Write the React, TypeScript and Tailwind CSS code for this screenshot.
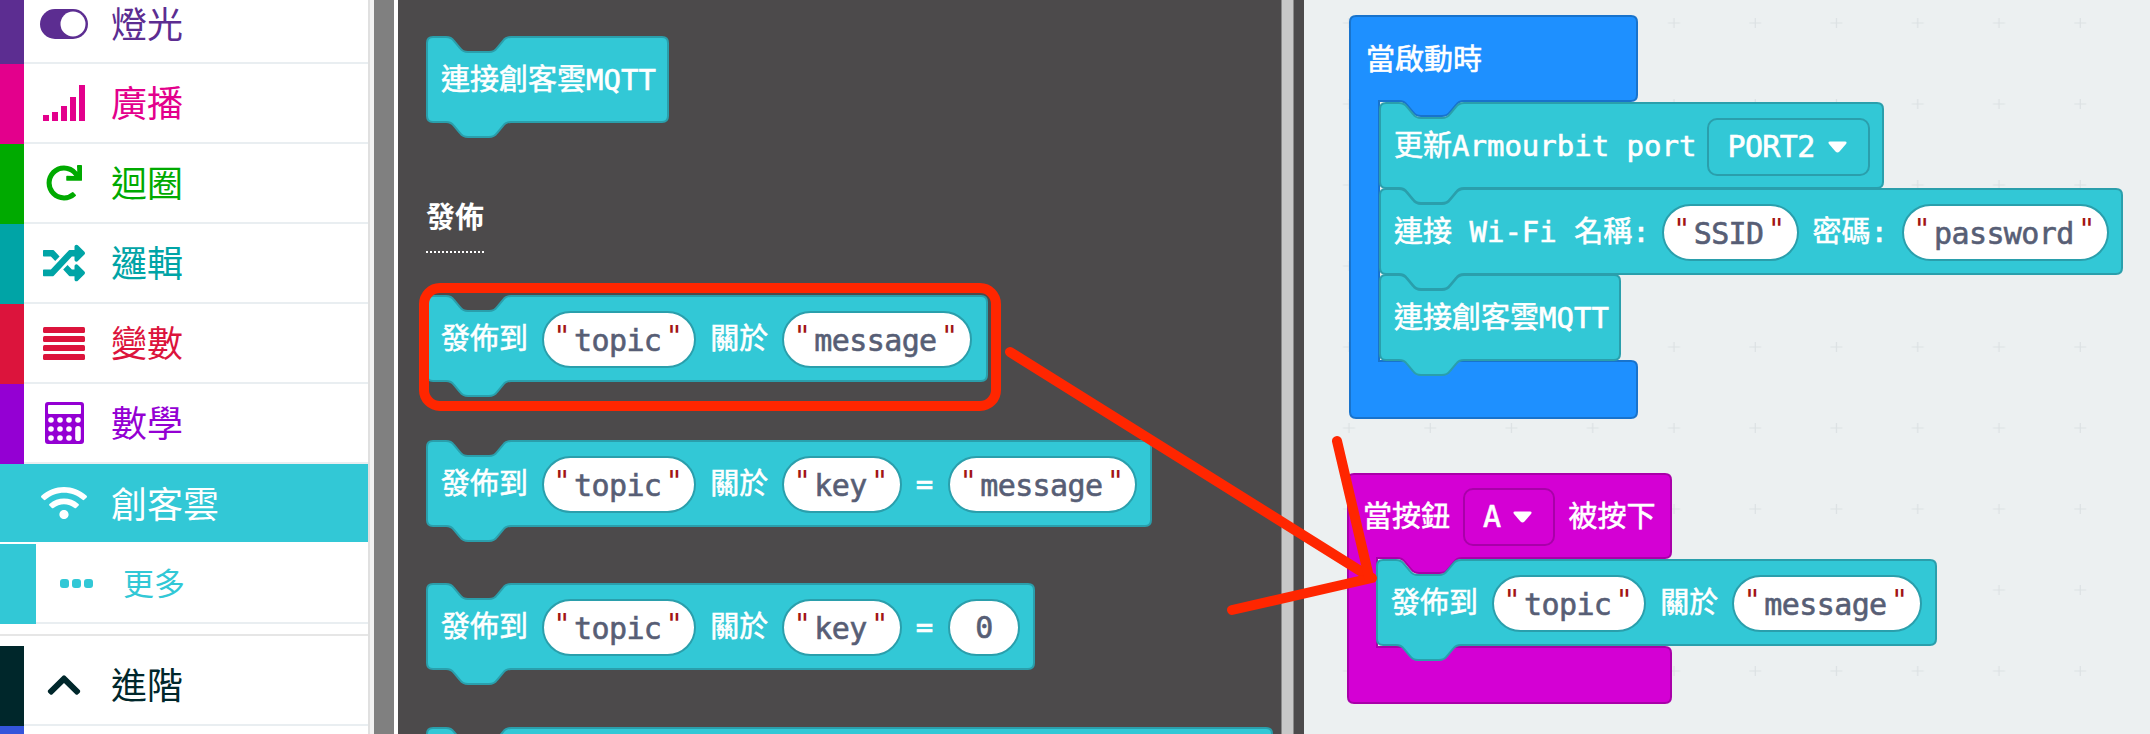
import React from "react";
import { FaRedo, FaRandom, FaWifi, FaChevronUp } from "react-icons/fa";

const TEAL = "#32c8d6";
const TEAL_DARK = "#2a9fac";
const mono = "font-['DejaVu_Sans_Mono','Noto_Sans_CJK_TC',monospace] [-webkit-text-stroke:0.6px_currentColor]";

const ToggleIcon = () => (
  <svg width="48" height="30" viewBox="0 0 48 30">
    <rect width="48" height="30" rx="15" fill="#5c2d91" />
    <circle cx="33" cy="15" r="12.5" fill="#fff" />
  </svg>
);

const SignalIcon = () => (
  <svg width="42" height="36" viewBox="0 0 42 36" fill="#e3008c">
    <rect x="0" y="30" width="6" height="6" />
    <rect x="9" y="27" width="6" height="9" />
    <rect x="18" y="21" width="6" height="15" />
    <rect x="27" y="12" width="6" height="24" />
    <rect x="36" y="0" width="6" height="36" />
  </svg>
);

const ListIcon = () => (
  <svg width="42" height="33" viewBox="0 0 42 33" fill="#dc143c">
    <rect y="0" width="42" height="6" rx="1.5" />
    <rect y="9" width="42" height="6" rx="1.5" />
    <rect y="18" width="42" height="6" rx="1.5" />
    <rect y="27" width="42" height="6" rx="1.5" />
  </svg>
);

const CalcIcon = () => (
  <svg width="39" height="42" viewBox="0 0 39 42">
    <rect width="39" height="42" rx="3" fill="#9400d3" />
    <rect x="3" y="3" width="33" height="9" rx="1" fill="#fff" />
    <g fill="#fff">
      {[6, 15, 24].map((x) =>
        [18, 27, 36].map((y) => <circle key={`${x}-${y}`} cx={x} cy={y} r="2.8" />)
      )}
      <circle cx="33" cy="18" r="2.8" />
      <rect x="30.2" y="24" width="5.6" height="15" rx="2.8" />
    </g>
  </svg>
);

const DotsIcon = () => (
  <svg width="33" height="9" viewBox="0 0 33 9" fill={TEAL}>
    <rect x="0" width="9" height="9" rx="3" />
    <rect x="12" width="9" height="9" rx="3" />
    <rect x="24" width="9" height="9" rx="3" />
  </svg>
);

const categories = [
  { label: "廣播", bar: "bg-[#e3008c]", text: "text-[#e3008c]", icon: <SignalIcon /> },
  { label: "迴圈", bar: "bg-[#00aa00]", text: "text-[#00aa00]", icon: <FaRedo size={36} /> },
  { label: "邏輯", bar: "bg-[#00a4a6]", text: "text-[#00a4a6]", icon: <FaRandom size={42} /> },
  { label: "變數", bar: "bg-[#dc143c]", text: "text-[#dc143c]", icon: <ListIcon /> },
  { label: "數學", bar: "bg-[#9400d3]", text: "text-[#9400d3]", icon: <CalcIcon /> },
];

const CategoryRow: React.FC<{
  label: string;
  bar: string;
  text: string;
  icon: React.ReactNode;
  className?: string;
  bodyClass?: string;
}> = ({ label, bar, text, icon, className = "h-20", bodyClass = "" }) => (
  <div className={`flex shrink-0 ${className}`}>
    <div className={`w-6 shrink-0 ${bar}`} />
    <div className={`flex flex-1 items-center border-b-2 border-[#e9eef1] ${text} ${bodyClass}`}>
      <div className="flex w-20 justify-center">{icon}</div>
      <span className="-mt-1 ml-[7px] text-[36px] leading-none">{label}</span>
    </div>
  </div>
);

const Sidebar = () => (
  <div className="flex h-full w-[368px] shrink-0 flex-col overflow-hidden bg-white font-['Noto_Sans_CJK_TC',sans-serif]">
    {/* first row is scrolled partly out of view */}
    <CategoryRow label="燈光" bar="bg-[#5c2d91]" text="text-[#5c2d91]" icon={<ToggleIcon />} className="h-16" bodyClass="pb-[14px]" />
    {categories.map((c) => (
      <CategoryRow key={c.label} {...c} />
    ))}
    <div className="flex h-[78px] shrink-0 items-center bg-[#32c8d6] pl-6 text-white">
      <div className="flex w-20 justify-center">
        <FaWifi size={46} />
      </div>
      <span className="-mt-[2px] ml-[7px] text-[36px] leading-none">創客雲</span>
    </div>
    <div className="flex h-[82px] shrink-0 border-t-2 border-white">
      <div className="w-9 shrink-0 bg-[#32c8d6]" />
      <div className="flex flex-1 items-center border-b-2 border-[#e9eef1] text-[#32c8d6]">
        <div className="ml-6">
          <DotsIcon />
        </div>
        <span className="-mt-1 ml-[30px] text-[31px] leading-none">更多</span>
      </div>
    </div>
    <div className="mt-[10px] h-[2px] shrink-0 bg-[#e6e6e6]" />
    <CategoryRow label="進階" bar="bg-[#00272b]" text="text-[#00272b]" icon={<FaChevronUp size={38} />} className="mt-[10px] h-20" />
    <div className="h-20 w-6 shrink-0 bg-[#3455db]" />
  </div>
);

// puzzle notch on top, tab below
const stackPath = (w: number, h: number) =>
  `M7 1 H20 c4 0 6 1 8 4 l6 7 c2 3 4 4 8 4 h21 c4 0 6 -1 8 -4 l6 -7 c2 -3 4 -4 8 -4 ` +
  `H${w - 7} Q${w - 1} 1 ${w - 1} 7 V${h - 7} Q${w - 1} ${h - 1} ${w - 7} ${h - 1} ` +
  `H85 c-4 0 -6 1 -8 4 l-6 7 c-2 3 -4 4 -8 4 h-21 c-4 0 -6 -1 -8 -4 l-6 -7 c-2 -3 -4 -4 -8 -4 ` +
  `H7 Q1 ${h - 1} 1 ${h - 7} V7 Q1 1 7 1 Z`;

const Block: React.FC<{ w: number; className: string; children: React.ReactNode }> = ({ w, className, children }) => (
  <div className={`relative h-[87px] shrink-0 ${className}`}>
    <svg className="absolute left-0 top-0 overflow-visible" width={w} height={87}>
      <path d={stackPath(w, 87)} fill={TEAL} stroke={TEAL_DARK} strokeWidth="2" />
    </svg>
    <div className={`relative flex h-full items-center gap-[14px] whitespace-pre pl-[15px] pt-[2px] text-[29px] leading-none text-white ${mono}`}>
      {children}
    </div>
  </div>
);

const Quote = () => (
  <span className="w-5 -translate-y-[3px] text-center text-[29px] tracking-normal text-[#a31515] [-webkit-text-stroke:0px]">"</span>
);

const Str: React.FC<{ children: string }> = ({ children }) => (
  <span className="flex h-[57px] items-center rounded-full border-2 border-[#2a9fac] bg-white pl-[8px] pr-[10px] text-[30px] tracking-[-0.6px] text-[#575e75]">
    <Quote />
    <span className="ml-[2px] mr-[3px] translate-y-[1px]">{children}</span>
    <Quote />
  </span>
);

const Num: React.FC<{ children: string }> = ({ children }) => (
  <span className="flex h-[57px] w-[72px] items-center justify-center rounded-full border-2 border-[#2a9fac] bg-white text-[30px] text-[#575e75]">
    {children}
  </span>
);

const Arrow = () => (
  <svg width="19" height="12" viewBox="0 0 19 12" fill="#fff">
    <path d="M2 0.5 H17 Q19.5 0.5 18 3 L11.5 10.5 Q9.5 12.5 7.5 10.5 L1 3 Q-0.5 0.5 2 0.5 Z" />
  </svg>
);

const Dropdown: React.FC<{ children: string; className: string }> = ({ children, className }) => (
  <span className={`flex h-[58px] items-center gap-[13px] rounded-[10px] border-2 pl-[18px] pr-[21px] text-[30px] tracking-[-0.6px] ${className}`}>
    {children}
    <Arrow />
  </span>
);

const Flyout = () => (
  <div className="flex h-full w-[883px] shrink-0 flex-col overflow-hidden bg-[#4c4a4b] pl-[28px] pt-9">
    <Block w={243} className="w-[243px]">
      連接創客雲MQTT
    </Block>
    <div className="mt-[74px] h-[56px] w-[58px] shrink-0 border-b-2 border-dotted border-white font-['Noto_Sans_CJK_TC',sans-serif] text-[29px] font-bold leading-[36px] text-white">
      發佈
    </div>
    <Block w={562} className="mt-[42px] w-[562px]">
      發佈到
      <Str>topic</Str>
      關於
      <Str>message</Str>
    </Block>
    <Block w={726} className="mt-[58px] w-[726px]">
      發佈到
      <Str>topic</Str>
      關於
      <Str>key</Str>
      <span className="mr-px">=</span>
      <Str>message</Str>
    </Block>
    <Block w={609} className="mt-[56px] w-[609px]">
      發佈到
      <Str>topic</Str>
      關於
      <Str>key</Str>
      <span className="mr-px">=</span>
      <Num>0</Num>
    </Block>
    <Block w={847} className="mt-[57px] w-[847px]">
      {""}
    </Block>
  </div>
);

// C shaped block: head, arm on the left, foot. The head carries a tab for the first child.
const hatPath = (w: number, h: number, arm: number, top: number, bottom: number) =>
  `M7 1 H${w - 7} Q${w - 1} 1 ${w - 1} 7 V${top - 7} Q${w - 1} ${top - 1} ${w - 7} ${top - 1} ` +
  `H${arm + 85} c-4 0 -6 1 -8 4 l-6 7 c-2 3 -4 4 -8 4 h-21 c-4 0 -6 -1 -8 -4 l-6 -7 c-2 -3 -4 -4 -8 -4 ` +
  `H${arm} V${bottom} H${w - 7} Q${w - 1} ${bottom} ${w - 1} ${bottom + 6} V${h - 7} Q${w - 1} ${h - 1} ${w - 7} ${h - 1} ` +
  `H7 Q1 ${h - 1} 1 ${h - 7} V7 Q1 1 7 1 Z`;

const Workspace = () => (
  <div className="relative h-full flex-1 overflow-hidden bg-[#ecf0f1]">
    <svg className="absolute inset-0 h-full w-full">
      <defs>
        <pattern id="grid" x="4" y="-18" width="81.25" height="81" patternUnits="userSpaceOnUse">
          <path d="M35 41 H47 M41 36 V46" stroke="#dce1e3" strokeWidth="1.2" />
        </pattern>
      </defs>
      <rect width="100%" height="100%" fill="url(#grid)" />
    </svg>

    {/* on start */}
    <div className="absolute left-[45px] top-[15px] h-[404px] w-[289px]">
      <svg className="absolute left-0 top-0 overflow-visible" width={289} height={404}>
        <path d={hatPath(289, 404, 30, 87, 346)} fill="#1e90ff" stroke="#1873cc" strokeWidth="2" />
      </svg>
      <div className={`relative flex h-[87px] items-center pl-[17px] pt-1 text-[29px] leading-none text-white ${mono}`}>
        當啟動時
      </div>
      <div className="relative ml-[30px] flex flex-col">
        <Block w={505} className="w-[505px]">
          <span className="-mr-[3px]">更新Armourbit port</span>
          <Dropdown className="border-[#2a9fac]">PORT2</Dropdown>
        </Block>
        <Block w={744} className="-mt-px w-[744px]">
          <span className="-mr-[2px]">連接 Wi-Fi 名稱:</span>
          <Str>SSID</Str>
          密碼:
          <Str>password</Str>
        </Block>
        <Block w={242} className="-mt-px w-[242px]">
          連接創客雲MQTT
        </Block>
      </div>
    </div>

    {/* button pressed */}
    <div className="absolute left-[43px] top-[473px] h-[231px] w-[325px]">
      <svg className="absolute left-0 top-0 overflow-visible" width={325} height={231}>
        <path d={hatPath(325, 231, 30, 86, 174)} fill="#d400d4" stroke="#a900a9" strokeWidth="2" />
      </svg>
      <div className={`relative flex h-[86px] items-center gap-[13px] pl-[16px] pt-[2px] text-[29px] leading-none text-white ${mono}`}>
        當按鈕
        <Dropdown className="border-[#a900a9]">A</Dropdown>
        被按下
      </div>
      <div className="relative ml-[29px]">
        <Block w={561} className="w-[561px]">
          發佈到
          <Str>topic</Str>
          關於
          <Str>message</Str>
        </Block>
      </div>
    </div>
  </div>
);

// hand drawn annotation on top of the screenshot
const Annotations = () => (
  <svg className="pointer-events-none absolute inset-0" width="2150" height="734">
    <rect x="424" y="288" width="572" height="118" rx="16" fill="none" stroke="#ff2600" strokeWidth="10" />
    <g stroke="#ff2600" strokeWidth="10" strokeLinecap="round" fill="none">
      <path d="M1010 352 L1370 577" />
      <path d="M1232 610 L1372 578" />
      <path d="M1337 441 L1369 577" />
    </g>
  </svg>
);

export default function App() {
  return (
    <div className="relative flex h-[734px] w-[2150px] overflow-hidden bg-white">
      <Sidebar />
      <div className="h-full w-[2px] shrink-0 bg-[#e0e0e0]" />
      <div className="h-full w-1 shrink-0 bg-[#f2f2f2]" />
      <div className="h-full w-5 shrink-0 bg-[#808080]" />
      <div className="h-full w-1 shrink-0 bg-white" />
      <Flyout />
      <div className="h-full w-[13px] shrink-0 border-x border-[#8a8a8a] bg-[#c8c8c8]" />
      <div className="h-full w-[10px] shrink-0 bg-[#4c4a4b]" />
      <Workspace />
      <Annotations />
    </div>
  );
}
